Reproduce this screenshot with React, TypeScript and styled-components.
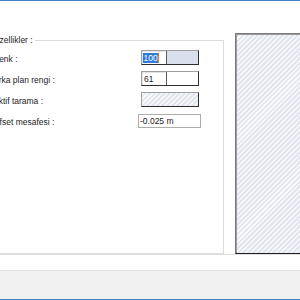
import React from "react";
import styled, { createGlobalStyle } from "styled-components";

const GlobalStyle = createGlobalStyle`
  html, body {
    margin: 0;
    padding: 0;
    width: 300px;
    height: 300px;
    overflow: hidden;
    background: #ffffff;
    font-family: "Liberation Sans", Arial, sans-serif;
    font-size: 8.5px;
    color: #1c1c1c;
  }
  * { box-sizing: border-box; }
`;

const hatch = `repeating-linear-gradient(
  135deg,
  #f6f7fa 0px,
  #f6f7fa 1.5px,
  #e3e6ee 1.5px,
  #e3e6ee 3.5px
)`;

const Window = styled.div`
  width: 300px;
  height: 300px;
  display: flex;
  flex-direction: column;
  border-top: 1px solid #3d83c3;
  border-bottom: 1px solid #3d83c3;
`;

const Main = styled.div`
  height: 254px;
  flex-shrink: 0;
  display: flex;
  align-items: flex-start;
  padding-top: 33px;
  border-bottom: 1px solid #e0e0e0;
  overflow: hidden;
`;

const Group = styled.div`
  width: 231px;
  margin-left: -7px;
  flex-shrink: 0;
  display: flex;
  flex-direction: column;
`;

const GroupHead = styled.div`
  height: 13px;
  display: flex;
`;

const Title = styled.span`
  line-height: 13px;
  padding-right: 2px;
  white-space: nowrap;
`;

const HeadLine = styled.div`
  flex: 1;
  align-self: flex-end;
  height: 7px;
  border-top: 1px solid #dcdcdc;
  border-right: 1px solid #dcdcdc;
`;

const GroupBody = styled.div`
  height: 207px;
  border-right: 1px solid #dcdcdc;
  border-bottom: 1px solid #dcdcdc;
  display: flex;
  flex-direction: column;
`;

const Row = styled.div`
  height: 21px;
  display: flex;
  align-items: center;
`;

const Label = styled.span`
  width: 148px;
  flex-shrink: 0;
  padding-top: 2px;
  white-space: nowrap;
`;

const SunkenField = styled.div`
  width: 58px;
  height: 15px;
  display: flex;
  border-top: 1px solid #a0a0a0;
  border-left: 1px solid #a0a0a0;
  border-right: 1px solid #2e2e2e;
  border-bottom: 1px solid #2e2e2e;
  box-shadow: inset 1px 1px 0 #e4e4e4;
  background: #ffffff;
`;

const ValuePart = styled.div`
  width: 25px;
  display: flex;
  align-items: center;
  padding-left: 1px;
  border-right: 1px solid #5a5a5a;
`;

const Swatch = styled.div<{ $color: string }>`
  flex: 1;
  background: ${(p) => p.$color};
`;

const Selected = styled.span`
  background: #2f7bd9;
  color: #ffffff;
  line-height: 10px;
  padding: 0 0.5px;
`;

const Caret = styled.span`
  width: 1px;
  height: 10px;
  background: #f07c1c;
`;

const PlainText = styled.span`
  line-height: 10px;
  padding-left: 1px;
`;

const HatchFill = styled.div`
  flex: 1;
  background: ${hatch};
`;

const TextField = styled.div`
  width: 63px;
  height: 14px;
  margin-left: -3px;
  border: 1px solid #acacac;
  background: #ffffff;
  display: flex;
  align-items: center;
  padding-left: 1px;
  white-space: nowrap;
`;

const Preview = styled.div`
  width: 80px;
  height: 221px;
  margin-top: -1px;
  margin-left: 11px;
  flex-shrink: 0;
  border-top: 1px solid #7c7c7c;
  border-left: 1px solid #7c7c7c;
  border-bottom: 1px solid #1e1e1e;
  box-shadow: inset 1px 1px 0 #9a9a9a;
  background: ${hatch};
`;

const Strip = styled.div`
  height: 16px;
  flex-shrink: 0;
  border-bottom: 1px solid #e2e2e2;
  background: #ffffff;
`;

const Footer = styled.div`
  flex: 1;
  background: #f0f0f0;
`;

export default function App() {
  return (
    <>
      <GlobalStyle />
      <Window>
        <Main>
          <Group>
            <GroupHead>
              <Title>Özellikler :</Title>
              <HeadLine />
            </GroupHead>
            <GroupBody>
              <Row>
                <Label>Renk :</Label>
                <SunkenField>
                  <ValuePart>
                    <Selected>100</Selected>
                    <Caret />
                  </ValuePart>
                  <Swatch $color="#dae0eb" />
                </SunkenField>
              </Row>
              <Row>
                <Label>Arka plan rengi :</Label>
                <SunkenField>
                  <ValuePart>
                    <PlainText>61</PlainText>
                  </ValuePart>
                  <Swatch $color="#ffffff" />
                </SunkenField>
              </Row>
              <Row>
                <Label>Aktif tarama :</Label>
                <SunkenField>
                  <HatchFill />
                </SunkenField>
              </Row>
              <Row>
                <Label>Ofset mesafesi :</Label>
                <TextField>-0.025 m</TextField>
              </Row>
            </GroupBody>
          </Group>
          <Preview />
        </Main>
        <Strip />
        <Footer />
      </Window>
    </>
  );
}
